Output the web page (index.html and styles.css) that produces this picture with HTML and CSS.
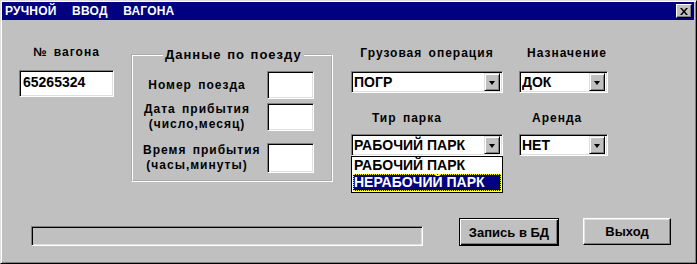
FILE: index.html
```html
<!DOCTYPE html>
<html lang="ru">
  <head>
    <meta charset="UTF-8" />
    <meta name="viewport" content="width=device-width, initial-scale=1.0" />
    <title>Ручной ввод вагона</title>
    <link rel="stylesheet" href="styles.css">
  </head>
  <body>
    <div class="window">
      <div class="titlebar">
        <span class="title">РУЧНОЙ ВВОД ВАГОНА</span>
        <button class="close" aria-label="Закрыть">
          <svg width="8" height="7" viewBox="0 0 8 7">
            <path d="M0 0h2l2 2.5L6 0h2L5 3.5 8 7H6L4 4.5 2 7H0l3-3.5z" fill="#000" />
          </svg>
        </button>
      </div>
      <div class="content">
        <div class="top">
          <div class="col col-wagon">
            <div class="label">№ вагона</div>
            <div class="field wagon-field">65265324</div>
          </div>

          <fieldset class="group">
            <legend>Данные по поезду</legend>
            <div class="row row-num">
              <div class="row-label">Номер поезда</div>
              <div class="field small"></div>
            </div>
            <div class="row row-date">
              <div class="row-label">Дата прибытия<br>(число,месяц)</div>
              <div class="field small"></div>
            </div>
            <div class="row row-time">
              <div class="row-label">Время прибытия<br>(часы,минуты)</div>
              <div class="field small tall"></div>
            </div>
          </fieldset>

          <div class="col col-op">
            <div class="label label-op">Грузовая операция</div>
            <div class="combo"><span class="combo-text">ПОГР</span><span class="arrow"></span></div>
            <div class="label label-park">Тир парка</div>
            <div class="combo-wrap">
              <div class="combo"><span class="combo-text">РАБОЧИЙ ПАРК</span><span class="arrow"></span></div>
              <ul class="list">
                <li>РАБОЧИЙ ПАРК</li>
                <li class="selected">НЕРАБОЧИЙ ПАРК</li>
              </ul>
            </div>
          </div>

          <div class="col col-dest">
            <div class="label label-dest">Назначение</div>
            <div class="combo"><span class="combo-text">ДОК</span><span class="arrow"></span></div>
            <div class="label label-rent">Аренда</div>
            <div class="combo"><span class="combo-text">НЕТ</span><span class="arrow"></span></div>
          </div>
        </div>

        <div class="bottom">
          <div class="progress"></div>
          <button class="btn btn-save">Запись в БД</button>
          <button class="btn btn-exit">Выход</button>
        </div>
      </div>
    </div>
  </body>
</html>
```

FILE: styles.css
```css
* {
  box-sizing: border-box;
}
body {
  margin: 0;
  background: #c0c0c0;
  font-family: "Liberation Sans", Arial, sans-serif;
  font-weight: bold;
  color: #000;
}

/* window frame */
.window {
  width: 697px;
  height: 264px;
  background: #c0c0c0;
  border: 1px solid;
  border-color: #dfdfdf #000 #000 #dfdfdf;
  box-shadow: inset 1px 1px #fff, inset -1px -1px #808080;
  padding: 1px 2px 2px 1px;
  display: flex;
  flex-direction: column;
}
.titlebar {
  height: 18px;
  background: #000080;
  display: flex;
  align-items: center;
  justify-content: space-between;
  padding: 0 2px 0 3px;
}
.title {
  color: #fff;
  font-size: 12px;
  word-spacing: 12px;
  letter-spacing: 0.2px;
}
.close {
  width: 16px;
  height: 14px;
  padding: 0;
  background: #c0c0c0;
  border: 1px solid;
  border-color: #fff #000 #000 #fff;
  box-shadow: inset -1px -1px #808080;
  display: flex;
  align-items: center;
  justify-content: center;
}

.content {
  flex: 1;
  display: flex;
  flex-direction: column;
}
.top {
  height: 198px;
  display: flex;
  align-items: flex-start;
  padding-left: 17px;
}

.label {
  font-size: 12px;
  line-height: 14px;
  letter-spacing: 1px;
  word-spacing: 2px;
  white-space: nowrap;
}

/* sunken white fields */
.field {
  background: #fff;
  border: 1px solid;
  border-color: #808080 #fff #fff #808080;
  box-shadow: inset 1px 1px #000, inset -1px -1px #dfdfdf;
}

.col-wagon {
  width: 95px;
  padding-top: 25px;
  text-align: center;
}
.wagon-field {
  margin-top: 11px;
  height: 27px;
  text-align: left;
  font-size: 14px;
  line-height: 23px;
  padding-left: 3px;
}

/* group box */
.group {
  margin: 28px 0 0 17px;
  width: 202px;
  height: 134px;
  padding: 9px 0 0 10px;
  border: 2px groove #fff;
}
.group legend {
  font-size: 13px;
  line-height: 14px;
  letter-spacing: 1px;
  word-spacing: 1px;
  margin-left: 20px;
  padding: 0 2px;
}
.row {
  display: grid;
  grid-template-columns: 108px 47px;
  column-gap: 16px;
  align-items: center;
}
.row-date {
  margin-top: 3px;
}
.row-time {
  margin-top: 11px;
}
.row-label {
  font-size: 12px;
  line-height: 15px;
  text-align: center;
  white-space: nowrap;
  letter-spacing: 1px;
  word-spacing: 2px;
}
.field.small {
  height: 28px;
}
.field.tall {
  height: 30px;
}

/* combo boxes */
.col-op {
  width: 152px;
  margin-left: 18px;
  padding-top: 26px;
}
.col-dest {
  width: 89px;
  margin-left: 16px;
  padding-top: 26px;
}
.label-op {
  text-align: center;
}
.label-park {
  margin-top: 18px;
  padding-left: 21px;
}
.label-dest {
  padding-left: 8px;
}
.label-rent {
  margin-top: 18px;
  padding-left: 13px;
}
.combo {
  margin-top: 11px;
  height: 22px;
  background: #fff;
  border: 1px solid;
  border-color: #808080 #fff #fff #808080;
  box-shadow: inset 1px 1px #000, inset -1px -1px #dfdfdf;
  display: flex;
  align-items: center;
  padding: 2px;
}
.label-park + .combo-wrap .combo,
.label-rent + .combo {
  margin-top: 9px;
}
.combo-text {
  flex: 1;
  font-size: 14px;
  line-height: 18px;
  white-space: nowrap;
  overflow: hidden;
}
.arrow {
  width: 16px;
  height: 18px;
  background: #c0c0c0;
  border: 1px solid;
  border-color: #dfdfdf #000 #000 #dfdfdf;
  box-shadow: inset 1px 1px #fff, inset -1px -1px #808080;
  display: flex;
  align-items: center;
  justify-content: center;
}
.arrow::after {
  content: "";
  border-left: 3.5px solid transparent;
  border-right: 3.5px solid transparent;
  border-top: 4px solid #000;
  margin-top: 1px;
}

/* open drop-down list */
.combo-wrap {
  position: relative;
}
.list {
  position: absolute;
  top: 100%;
  left: 0;
  width: 152px;
  margin: 0;
  padding: 0 1px 1px;
  list-style: none;
  background: #fff;
  border: 1px solid #000;
  font-size: 14px;
  line-height: 16px;
}
.list li {
  height: 17px;
  padding-left: 1px;
  white-space: nowrap;
}
.list li.selected {
  background: #000080;
  color: #fff;
  outline: 1px dotted #ffff00;
  outline-offset: -1px;
}

/* bottom row */
.bottom {
  display: flex;
  align-items: flex-start;
  padding-left: 29px;
}
.progress {
  margin-top: 8px;
  width: 392px;
  height: 20px;
  border: 1px solid;
  border-color: #808080 #fff #fff #808080;
  box-shadow: inset 1px 1px #000, inset -1px -1px #dfdfdf;
}
.btn {
  height: 28px;
  padding: 0;
  font-family: inherit;
  font-weight: bold;
  font-size: 13px;
  color: #000;
  background: #c0c0c0;
  border: 1px solid;
  border-color: #fff #000 #000 #fff;
  box-shadow: inset -1px -1px #808080, inset 1px 1px #dfdfdf;
}
.btn-save {
  width: 100px;
  margin-left: 36px;
  border-color: #000;
  box-shadow: inset 1px 1px #fff, inset -1px -1px #000, inset -2px -2px #808080;
}
.btn-exit {
  width: 88px;
  height: 27px;
  margin-left: 24px;
}
```
